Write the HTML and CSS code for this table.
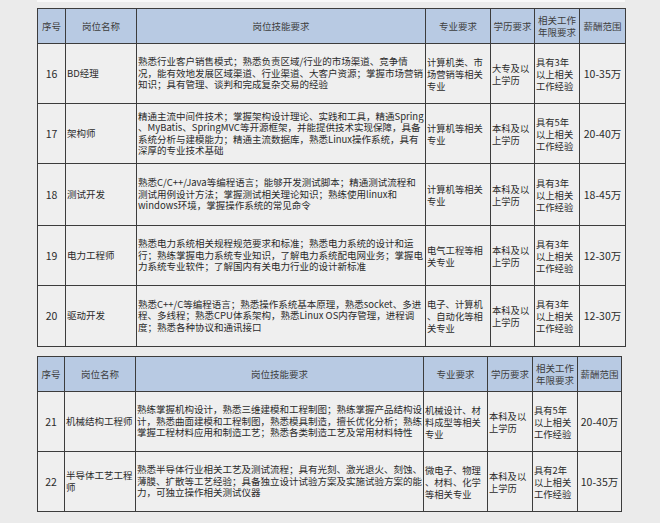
FILE: index.html
```html
<!DOCTYPE html>
<html lang="zh-CN">
<head>
<meta charset="utf-8">
<title>岗位</title>
<link rel="stylesheet" href="styles.css">
</head>
<body>
<div class="page">
  <div class="strip"></div>
  <table class="jobs jobs-a">
    <colgroup>
      <col class="c-no"><col class="c-name"><col class="c-skill"><col class="c-major"><col class="c-edu"><col class="c-exp"><col class="c-pay">
    </colgroup>
    <thead>
      <tr class="head">
        <th>序号</th><th>岗位名称</th><th>岗位技能要求</th><th>专业要求</th><th>学历要求</th><th>相关工作<br>年限要求</th><th>薪酬范围</th>
      </tr>
    </thead>
    <tbody>
      <tr class="r60">
        <td class="no">16</td><td class="name">BD经理</td>
        <td class="skill">熟悉行业客户销售模式；熟悉负责区域/行业的市场渠道、竞争情<br>况，能有效地发展区域渠道、行业渠道、大客户资源；掌握市场营销<br>知识；具有管理、谈判和完成复杂交易的经验</td>
        <td class="txt">计算机类、市<br>场营销等相关<br>专业</td>
        <td class="txt">大专及以<br>上学历</td>
        <td class="txt">具有3年<br>以上相关<br>工作经验</td>
        <td class="pay">10-35万</td>
      </tr>
      <tr class="r60">
        <td class="no">17</td><td class="name">架构师</td>
        <td class="skill">精通主流中间件技术；掌握架构设计理论、实践和工具，精通Spring<br>、MyBatis、SpringMVC等开源框架，并能提供技术实现保障，具备<br>系统分析与建模能力；精通主流数据库，熟悉Linux操作系统，具有<br>深厚的专业技术基础</td>
        <td class="txt">计算机等相关<br>专业</td>
        <td class="txt">本科及以<br>上学历</td>
        <td class="txt">具有5年<br>以上相关<br>工作经验</td>
        <td class="pay">20-40万</td>
      </tr>
      <tr class="r62">
        <td class="no">18</td><td class="name">测试开发</td>
        <td class="skill">熟悉C/C++/Java等编程语言；能够开发测试脚本；精通测试流程和<br>测试用例设计方法；掌握测试相关理论知识；熟练使用linux和<br>windows环境，掌握操作系统的常见命令</td>
        <td class="txt">计算机等相关<br>专业</td>
        <td class="txt">本科及以<br>上学历</td>
        <td class="txt">具有3年<br>以上相关<br>工作经验</td>
        <td class="pay">18-45万</td>
      </tr>
      <tr class="r60">
        <td class="no">19</td><td class="name">电力工程师</td>
        <td class="skill">熟悉电力系统相关规程规范要求和标准；熟悉电力系统的设计和运<br>行；熟练掌握电力系统专业知识，了解电力系统配电网业务；掌握电<br>力系统专业软件；了解国内有关电力行业的设计新标准</td>
        <td class="txt">电气工程等相<br>关专业</td>
        <td class="txt">本科及以<br>上学历</td>
        <td class="txt">具有3年<br>以上相关<br>工作经验</td>
        <td class="pay">12-30万</td>
      </tr>
      <tr class="r61">
        <td class="no">20</td><td class="name">驱动开发</td>
        <td class="skill">熟悉C++/C等编程语言；熟悉操作系统基本原理，熟悉socket、多进<br>程、多线程；熟悉CPU体系架构，熟悉Linux OS内存管理，进程调<br>度；熟悉各种协议和通讯接口</td>
        <td class="txt">电子、计算机<br>、自动化等相<br>关专业</td>
        <td class="txt">本科及以<br>上学历</td>
        <td class="txt">具有3年<br>以上相关<br>工作经验</td>
        <td class="pay">12-30万</td>
      </tr>
    </tbody>
  </table>

  <table class="jobs jobs-b">
    <colgroup>
      <col class="c-no"><col class="c-name"><col class="c-skill"><col class="c-major"><col class="c-edu"><col class="c-exp"><col class="c-pay">
    </colgroup>
    <thead>
      <tr class="head">
        <th>序号</th><th>岗位名称</th><th>岗位技能要求</th><th>专业要求</th><th>学历要求</th><th>相关工作<br>年限要求</th><th>薪酬范围</th>
      </tr>
    </thead>
    <tbody>
      <tr class="r60">
        <td class="no">21</td><td class="name">机械结构工程师</td>
        <td class="skill">熟练掌握机构设计，熟悉三维建模和工程制图；熟练掌握产品结构设<br>计，熟悉曲面建模和工程制图，熟悉模具制造，擅长优化分析；熟练<br>掌握工程材料应用和制造工艺；熟悉各类制造工艺及常用材料特性</td>
        <td class="txt">机械设计、材<br>料成型等相关<br>专业</td>
        <td class="txt">本科及以<br>上学历</td>
        <td class="txt">具有5年<br>以上相关<br>工作经验</td>
        <td class="pay">20-40万</td>
      </tr>
      <tr class="r60">
        <td class="no">22</td><td class="name">半导体工艺工程<br>师</td>
        <td class="skill">熟悉半导体行业相关工艺及测试流程；具有光刻、激光退火、刻蚀、<br>薄膜、扩散等工艺经验；具备独立设计试验方案及实施试验方案的能<br>力，可独立操作相关测试仪器</td>
        <td class="txt">微电子、物理<br>、材料、化学<br>等相关专业</td>
        <td class="txt">本科及以<br>上学历</td>
        <td class="txt">具有2年<br>以上相关<br>工作经验</td>
        <td class="pay">10-35万</td>
      </tr>
    </tbody>
  </table>
</div>
</body>
</html>
```

FILE: styles.css
```css
html, body {
  margin: 0;
  padding: 0;
  background: #ebebeb;
}

.page {
  padding: 0 0 0 37px;
  font-family: "Noto Sans CJK SC", "Noto Sans", sans-serif;
  color: #2b2b2b;
}

.strip {
  width: 588px;
  height: 2px;
  background: #f8f8f8;
  margin-bottom: 6px;
}

.jobs {
  border-collapse: collapse;
  table-layout: fixed;
  background: #efefef;
  font-size: 9.5px;
  line-height: 11.5px;
}

.jobs-a { width: 588px; }
.jobs-b { width: 584px; margin-top: 9px; }

.jobs-a .c-no { width: 28px; }
.jobs-a .c-name { width: 71px; }
.jobs-a .c-skill { width: 289px; }
.jobs-a .c-major { width: 65px; }
.jobs-a .c-edu { width: 44px; }
.jobs-a .c-exp { width: 45px; }
.jobs-a .c-pay { width: 46px; }

.jobs-b .c-no { width: 27px; }
.jobs-b .c-name { width: 71px; }
.jobs-b .c-skill { width: 288px; }
.jobs-b .c-major { width: 64px; }
.jobs-b .c-edu { width: 45px; }
.jobs-b .c-exp { width: 45px; }
.jobs-b .c-pay { width: 44px; }

.jobs th, .jobs td {
  border: 1px solid #3c3c3c;
  padding: 0 1px;
  vertical-align: middle;
  overflow: hidden;
}

.head {
  height: 35px;
  background: #b8cae3;
}

.head th {
  font-weight: normal;
  color: #3e3e3e;
  text-align: center;
  font-size: 9.5px;
  line-height: 12px;
  white-space: nowrap;
}

.r60 { height: 60px; }
.r61 { height: 61px; }
.r62 { height: 62px; }

.no {
  text-align: center;
  font-size: 10.5px;
}

.name {
  text-align: left;
  white-space: nowrap;
}

.skill {
  white-space: nowrap;
  text-align: left;
}

.txt {
  white-space: nowrap;
  text-align: left;
  font-size: 9.3px;
  line-height: 12px;
}

.pay {
  text-align: center;
  white-space: nowrap;
  font-size: 10.5px;
}
```
